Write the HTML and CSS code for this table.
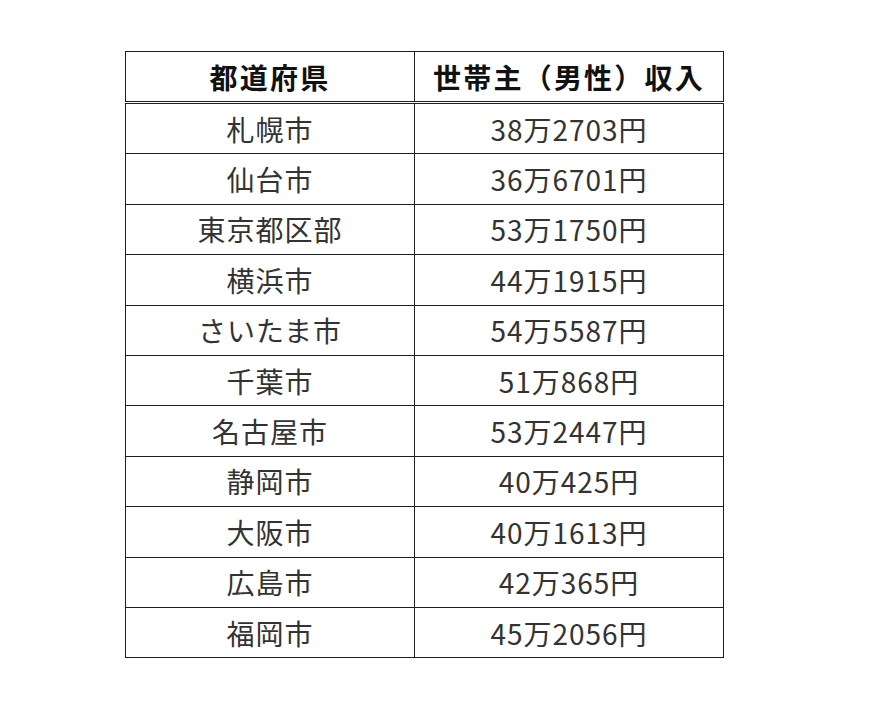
FILE: index.html
```html
<!DOCTYPE html>
<html lang="ja">
<head>
<meta charset="utf-8">
<link rel="stylesheet" href="styles.css">
</head>
<body>
<div class="page">
<table class="income">
<thead>
<tr><th class="col-city">都道府県</th><th class="col-income">世帯主（男性）収入</th></tr>
</thead>
<tbody>
<tr><td>札幌市</td><td>38万2703円</td></tr>
<tr><td>仙台市</td><td>36万6701円</td></tr>
<tr><td>東京都区部</td><td>53万1750円</td></tr>
<tr><td>横浜市</td><td>44万1915円</td></tr>
<tr><td>さいたま市</td><td>54万5587円</td></tr>
<tr><td>千葉市</td><td>51万868円</td></tr>
<tr><td>名古屋市</td><td>53万2447円</td></tr>
<tr><td>静岡市</td><td>40万425円</td></tr>
<tr><td>大阪市</td><td>40万1613円</td></tr>
<tr><td>広島市</td><td>42万365円</td></tr>
<tr><td>福岡市</td><td>45万2056円</td></tr>
</tbody>
</table>
</div>
</body>
</html>
```

FILE: styles.css
```css
html, body {
  margin: 0;
  padding: 0;
  background: #ffffff;
}

.page {
  padding: 51px 0 0 125px;
}

.income {
  border-collapse: collapse;
  width: 599px;
  table-layout: fixed;
  font-family: "Noto Sans CJK JP", "Noto Sans", sans-serif;
  color: #333333;
  border: 1px solid #1e1e1e;
}

.col-city {
  width: 288px;
}

.income th,
.income td {
  border: 1px solid #1e1e1e;
  text-align: center;
  vertical-align: middle;
  padding: 0;
}

.income th {
  height: 49px;
  font-size: 28px;
  font-weight: 700;
  color: #111111;
  letter-spacing: 2.2px;
  border-bottom: 3px double #1e1e1e;
}

.income td {
  height: 49.4px;
  font-size: 28px;
  font-weight: 400;
  letter-spacing: 1px;
  line-height: 1;
}
```
